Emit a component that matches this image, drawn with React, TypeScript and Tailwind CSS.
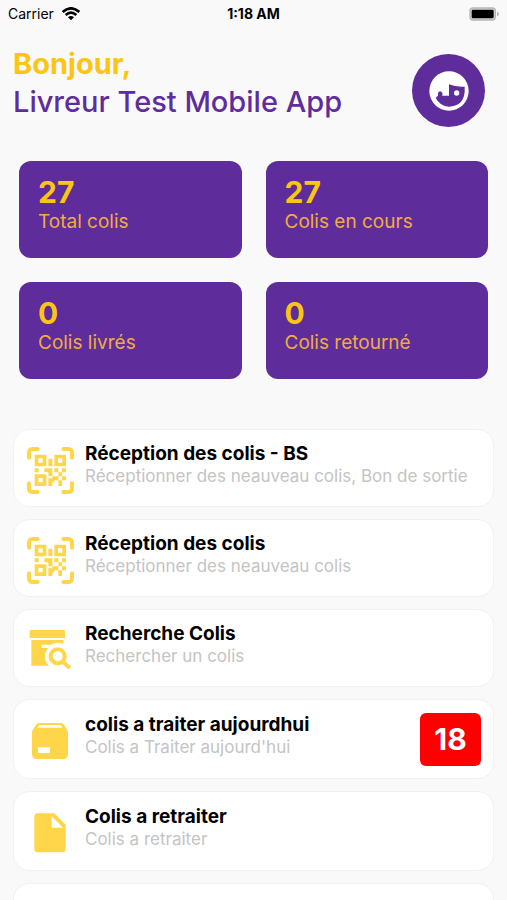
import React, { ReactNode } from "react";

const stats = [
  { value: 27, label: "Total colis" },
  { value: 27, label: "Colis en cours" },
  { value: 0, label: "Colis livrés" },
  { value: 0, label: "Colis retourné" },
];

interface MenuItem {
  title: string;
  subtitle: string;
  icon: ReactNode;
  count?: number;
  tall?: boolean;
}

const QrIcon = () => (
  <svg viewBox="0 0 141 141" className="w-[47px] h-[47px]" fill="currentColor" aria-hidden="true">
    <path
      d="M6 32V16a10 10 0 0 1 10-10h16M109 6h16a10 10 0 0 1 10 10v16M135 109v16a10 10 0 0 1-10 10h-16M32 135H16a10 10 0 0 1-10-10v-16"
      fill="none"
      stroke="currentColor"
      strokeWidth="12"
      strokeLinecap="round"
    />
    <path
      fillRule="evenodd"
      d="M23 23h35v35H23zM34 34v13h13V34zM82 23h35v35H82zM93 34v13h13V34zM23 82h35v35H23zM34 93v13h13V93z"
    />
    <path d="M64 35h12v23H64zM23 64h12v12H23zM52 64h24v24H64V76H52zM82 64h12v12H82zM105 64h12v12H105zM94 76h11v12H94zM82 88h12v12H82v6h-6v11H64V94h12v-6h6zM105 88h12v12H105zM94 100h11v17H94z" />
  </svg>
);

const SearchBoxIcon = () => (
  <svg viewBox="0 0 126 120" className="w-[42px] h-[40px]" fill="currentColor" aria-hidden="true">
    <path d="M2 0h106v24H2zM7 30h96v12a38 38 0 0 0-35 2H38v10h20a38 38 0 0 0 2 53H7z" />
    <circle cx="86" cy="79" r="21" fill="none" stroke="currentColor" strokeWidth="12" />
    <path d="M100 94l23 20" stroke="currentColor" strokeWidth="12" />
  </svg>
);

const BoxIcon = () => (
  <svg viewBox="0 0 108 108" className="w-[36px] h-[36px]" fill="currentColor" aria-hidden="true">
    <path
      fillRule="evenodd"
      d="M22 0h64q6 0 10 5l10 17q2 4 2 8v64q0 14-14 14H14Q0 108 0 94V30q0-4 2-8L12 5q4-5 10-5zM22 6l-6 8h76l-6-8zM18 73v17h36V73z"
    />
  </svg>
);

const FileIcon = () => (
  <svg viewBox="0 0 96 120" className="w-[32px] h-[40px]" fill="currentColor" aria-hidden="true">
    <path
      fillRule="evenodd"
      d="M11 1h50l34 34v72q0 11-11 11H11Q1 118 1 107V12Q1 1 11 1zM53 10v34h34z"
    />
  </svg>
);

const WifiIcon = () => (
  <svg viewBox="0 0 54 42" className="w-[18px] h-[14px]" fill="none" stroke="currentColor" aria-hidden="true">
    <path d="M2 15Q27-7 52 15M11 24Q27 10 43 24" strokeWidth="8" />
    <path d="M18 31q9-8 18 0l-9 9z" fill="currentColor" stroke="none" />
  </svg>
);

const BatteryIcon = () => (
  <svg viewBox="0 0 90 42" className="w-[30px] h-[14px]" aria-hidden="true">
    <rect x="1" y="1" width="80" height="40" rx="11" fill="#b5b5b5" />
    <rect x="5" y="5" width="72" height="32" rx="7" fill="#d9d9d9" />
    <rect x="8" y="8" width="66" height="26" rx="4" fill="#000" />
    <path d="M84 14q6 2 6 7t-6 7z" fill="#b5b5b5" />
  </svg>
);

const FaceIcon = () => (
  <svg viewBox="0 0 120 120" className="w-[40px] h-[40px]" aria-hidden="true">
    <circle cx="60" cy="60" r="59" fill="#fff" />
    <path d="M60 40Q80 49 107 47Q109 78 95 94Q80 107 60 107Q32 105 20 80L27 74V66Q33 56 40 66V74H60z" fill="#5f2c9c" />
    <circle cx="83" cy="66" r="8" fill="#fff" />
  </svg>
);

const items: MenuItem[] = [
  { title: "Réception des colis - BS", subtitle: "Réceptionner des neauveau colis, Bon de sortie", icon: <QrIcon /> },
  { title: "Réception des colis", subtitle: "Réceptionner des neauveau colis", icon: <QrIcon /> },
  { title: "Recherche Colis", subtitle: "Rechercher un colis", icon: <SearchBoxIcon /> },
  { title: "colis a traiter aujourdhui", subtitle: "Colis a Traiter aujourd'hui", icon: <BoxIcon />, count: 18, tall: true },
  { title: "Colis a retraiter", subtitle: "Colis a retraiter", icon: <FileIcon />, tall: true },
  { title: "", subtitle: "", icon: null, tall: true },
];

const MenuCard = ({ title, subtitle, icon, count, tall }: MenuItem) => (
  <button
    className={`w-full shrink-0 flex flex-row items-center rounded-2xl border border-[#f1f1f1] bg-white px-3 text-left ${
      tall ? "h-20" : "h-[78px]"
    }`}
  >
    <span className="w-12 mt-1 shrink-0 flex justify-center text-[#ffd54a]">{icon}</span>
    <span className="ml-[11px] mb-2 flex-1 flex flex-col">
      <span className="text-[19px] leading-6 font-bold text-black">{title}</span>
      <span className="text-[17px] leading-5 text-[#c4c4c4]">{subtitle}</span>
    </span>
    {count !== undefined && (
      <span className="w-[61px] h-[53px] shrink-0 flex items-center justify-center rounded-md bg-[#ff0000] text-[30px] font-bold text-white">
        {count}
      </span>
    )}
  </button>
);

export default function App() {
  return (
    <div className="h-screen flex flex-col overflow-hidden bg-[#f9f9f9] font-['Inter',sans-serif]">
      <div className="shrink-0 h-7 grid grid-cols-3 items-center px-2 text-sm text-black">
        <div className="flex flex-row items-center gap-2">
          <span>Carrier</span>
          <WifiIcon />
        </div>
        <span className="text-center font-bold">1:18 AM</span>
        <div className="flex justify-end">
          <BatteryIcon />
        </div>
      </div>

      <header className="shrink-0 mt-[10px] flex flex-row items-center justify-between pl-[13px] pr-[22px]">
        <h1 className="text-[29px] leading-[38px]">
          <span className="block font-bold text-[#fdc513]">Bonjour,</span>
          <span className="block font-medium text-[#5f2c9c]">Livreur Test Mobile App</span>
        </h1>
        <button aria-label="Profil" className="mt-4 size-[73px] flex items-center justify-center rounded-full bg-[#5f2c9c]">
          <FaceIcon />
        </button>
      </header>

      <section className="shrink-0 mt-[34px] grid grid-cols-2 gap-6 px-[19px]">
        {stats.map((stat) => (
          <div key={stat.label} className="h-[97px] rounded-xl bg-[#5f2c9c] px-[19px] pt-[13px]">
            <p className="text-[30px] leading-9 font-bold text-[#fdc513]">{stat.value}</p>
            <p className="text-[19px] leading-6 text-[#f0ad3c]">{stat.label}</p>
          </div>
        ))}
      </section>

      <main className="mt-[50px] flex flex-col gap-3 px-[13px]">
        {items.map((item, index) => (
          <MenuCard key={index} {...item} />
        ))}
      </main>
    </div>
  );
}
